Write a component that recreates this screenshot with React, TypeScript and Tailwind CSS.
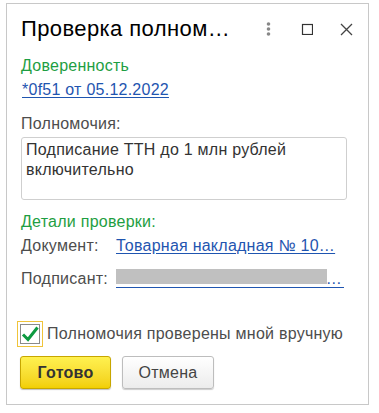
const font = { fontFamily: '"Liberation Sans", Arial, sans-serif' };

const Row = ({ label, children }: { label: string; children: React.ReactNode }) => (
  <div className="flex items-start h-[18px] leading-[18px]">
    <span className="w-[95px] shrink-0 text-[#4d4d4d]">{label}</span>
    {children}
  </div>
);

export default function App() {
  return (
    <div className="w-[379px] h-[413px] bg-white pt-[3px] pl-[6px]" style={font}>
      <div className="w-[363px] h-[402px] border border-[#c8c8c8] flex flex-col text-[16px] tracking-[0.25px] text-[#333]">
        {/* title bar */}
        <div className="flex items-center h-[26px] mt-[12px] pl-[14px] pr-[15px]">
          <span className="text-[22px] tracking-[0.4px] leading-[26px] text-black whitespace-nowrap">Проверка полном…</span>
          <div className="ml-auto flex items-center">
            <svg width="5" height="14" viewBox="0 0 5 14" className="mr-[30px]">
              <circle cx="2.5" cy="2" r="1.8" fill="#888" />
              <circle cx="2.5" cy="7" r="1.8" fill="#888" />
              <circle cx="2.5" cy="12" r="1.8" fill="#888" />
            </svg>
            <svg width="12" height="12" viewBox="0 0 12 12" className="mr-[27px]">
              <rect x="1.5" y="1.5" width="10" height="10" fill="none" stroke="#333" strokeWidth="1.2" />
            </svg>
            <svg width="13" height="13" viewBox="0 0 13 13">
              <path d="M1 1 L12 12 M12 1 L1 12" stroke="#444" strokeWidth="1.3" />
            </svg>
          </div>
        </div>

        <div className="pl-[14px] pr-[16px] flex flex-col">
          <div className="mt-[15px] leading-[18px] text-[#1e9e42]">Доверенность</div>
          <div className="mt-[6px] leading-[18px] pl-[1px]">
            <a className="text-[#1f55b0] underline underline-offset-2">*0f51 от 05.12.2022</a>
          </div>

          <div className="mt-[16px] leading-[18px] text-[#4d4d4d]">Полномочия:</div>
          <div className="mt-[4px] w-[326px] h-[63px] border border-[#cfcfcf] rounded-[3px] px-[4px] pt-[2px] leading-[20px] text-[#333]">
            Подписание ТТН до 1 млн рублей включительно
          </div>

          <div className="mt-[13px] leading-[18px] text-[#1e9e42]">Детали проверки:</div>
          <div className="mt-[6px]">
            <Row label="Документ:">
              <a className="text-[#1f55b0] underline underline-offset-2 whitespace-nowrap">Товарная накладная № 10…</a>
            </Row>
          </div>
          <div className="mt-[15px]">
            <Row label="Подписант:">
              <div className="relative w-[228px] h-[18px] border-b border-[#1f55b0]">
                <div className="absolute left-0 top-[-1px] w-[211px] h-[15px] bg-[#c0c0c0]" />
                <span className="absolute right-[2px] top-0 text-[#1f55b0] leading-[18px]">…</span>
              </div>
            </Row>
          </div>

          {/* checkbox */}
          <div className="mt-[33px] flex items-center -ml-[4px]">
            <div className="w-[26px] h-[26px] border border-[#f0c43a] flex items-center justify-center">
              <div className="w-[20px] h-[20px] border border-[#8a8a8a] bg-white flex items-center justify-center">
                <svg width="18" height="16" viewBox="0 0 18 16">
                  <path d="M2 8.5 L7 13.5 L16.5 1.5" fill="none" stroke="#0d9a40" strokeWidth="3" />
                </svg>
              </div>
            </div>
            <span className="ml-[4px] leading-[18px] text-[#4d4d4d] whitespace-nowrap">Полномочия проверены мной вручную</span>
          </div>

          {/* buttons */}
          <div className="mt-[9px] flex gap-[11px] -ml-[1px]">
            <button className="w-[91px] h-[33px] rounded-[3px] border border-[#c7a600] bg-gradient-to-b from-[#fff14f] to-[#f2cf00] font-bold text-[#333] shadow-[0_1px_1px_rgba(0,0,0,0.25)]">
              Готово
            </button>
            <button className="w-[92px] h-[33px] rounded-[3px] border border-[#bdbdbd] bg-gradient-to-b from-white to-[#ececec] text-[#444] shadow-[0_1px_1px_rgba(0,0,0,0.2)]">
              Отмена
            </button>
          </div>
        </div>
      </div>
    </div>
  );
}
